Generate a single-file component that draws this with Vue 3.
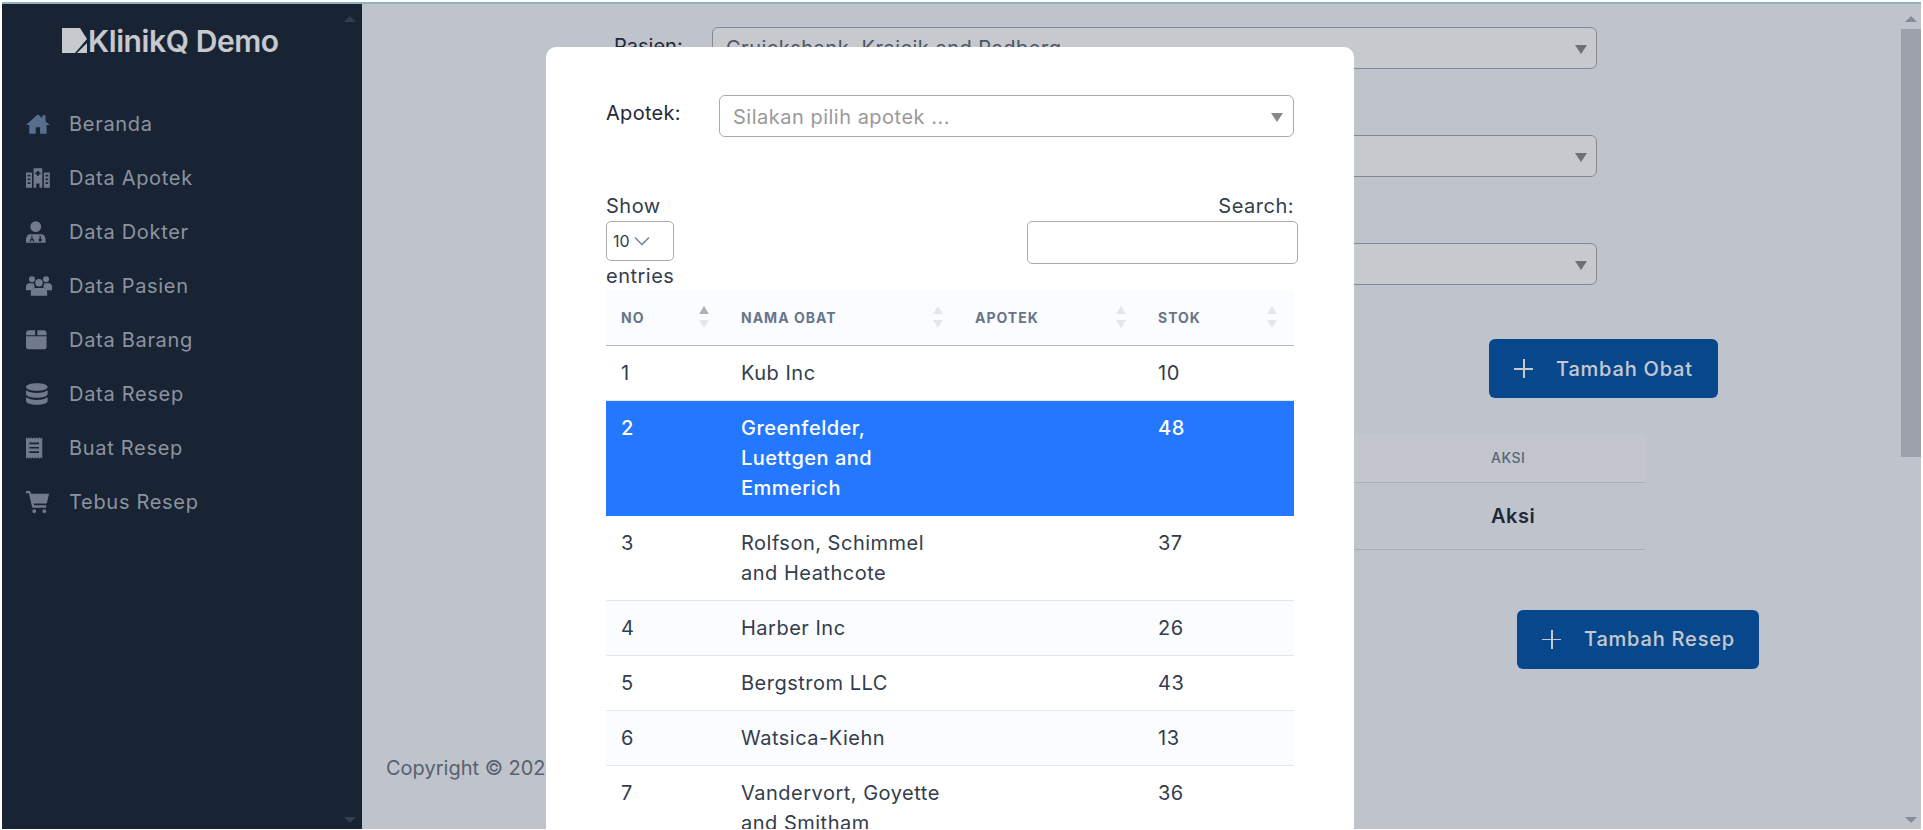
<template>
  <div class="frame">
    <div class="page">
      <aside class="sidebar">
        <div class="brand">
          <svg class="brand-mark" viewBox="0 0 25 25"><path d="M0 0H18L25 11L13 25H0Z" fill="#fff" /><path d="M25 15V25H15Z" fill="#fff" /></svg>
          <span>KlinikQ Demo</span>
        </div>
        <nav class="menu">
          <a v-for="item in menu" :key="item.label" class="menu-item">
            <svg class="menu-icon" :class="{ home: item.label === 'Beranda' }" :viewBox="item.box"><path :d="item.icon" fill="currentColor" fill-rule="evenodd" /></svg>
            <span>{{ item.label }}</span>
          </a>
        </nav>
        <span class="arrow arrow-up side-up"></span>
        <span class="arrow arrow-down side-down"></span>
      </aside>

      <main class="content">
        <div class="form">
          <div v-for="(row, i) in formRows" :key="i" class="form-row">
            <label>{{ row.label }}</label>
            <div class="select">
              <span>{{ row.value }}</span>
              <i class="caret"></i>
            </div>
          </div>
        </div>

        <button class="btn btn-obat"><span class="plus"></span>Tambah Obat</button>

        <table class="resep-table">
          <thead>
            <tr><th></th><th class="aksi-col">Aksi</th></tr>
          </thead>
          <tbody>
            <tr><td></td><td class="aksi-col">Aksi</td></tr>
          </tbody>
        </table>

        <button class="btn btn-resep"><span class="plus"></span>Tambah Resep</button>

        <footer class="copyright">Copyright © 2023</footer>
      </main>

      <div class="scrollbar">
        <span class="arrow arrow-up"></span>
        <div class="thumb"></div>
        <span class="arrow arrow-down"></span>
      </div>

      <div class="overlay">
        <div class="modal">
          <div class="apotek-row">
            <label>Apotek:</label>
            <div class="select modal-select">
              <span class="placeholder">Silakan pilih apotek ...</span>
              <i class="caret"></i>
            </div>
          </div>

          <div class="dt-top">
            <div class="dt-length">
              <div>Show</div>
              <div class="length-select">10
                <svg viewBox="0 0 16 10"><path d="M1 1.5L8 8.5L15 1.5" fill="none" stroke="#7b8a9e" stroke-width="1.6" /></svg>
              </div>
              <div>entries</div>
            </div>
            <div class="dt-search">
              <div>Search:</div>
              <div class="search-input"></div>
            </div>
          </div>

          <table class="obat-table">
            <colgroup>
              <col style="width: 120px" />
              <col style="width: 234px" />
              <col style="width: 183px" />
              <col style="width: 151px" />
            </colgroup>
            <thead>
              <tr>
                <th v-for="(col, i) in columns" :key="col">
                  {{ col }}
                  <span class="sort">
                    <i class="sort-up" :class="{ active: i === 0 }"></i>
                    <i class="sort-down"></i>
                  </span>
                </th>
              </tr>
            </thead>
            <tbody>
              <tr v-for="o in obat" :key="o.no" :class="{ selected: o.no === 2 }">
                <td>{{ o.no }}</td>
                <td class="name">{{ o.nama }}</td>
                <td></td>
                <td>{{ o.stok }}</td>
              </tr>
            </tbody>
          </table>
        </div>
      </div>
    </div>
  </div>
</template>

<script setup>
const menu = [
  { label: 'Beranda', box: '1 0 24 24', icon: 'M12 3L1 13h3v8h6v-6h4v6h6v-8h3l-4-3.6V4h-3v2.7z' },
  { label: 'Data Apotek', box: '1 0 24 24', icon: 'M8 3h8v18h-2.5v-4h-3v4H8zM11 5.5v1.5H9.500v1.500H11V10h2V8.500h1.500V7H13V5.500zM1 7h5.500v14H1zM2.500 9v1.500h2.500V9zM2.500 12.500V14h2.500v-1.500zM2.500 16v1.500h2.500V16zM17.500 7H23v14h-5.500zM19 9v1.500h2.500V9zM19 12.500V14h2.500v-1.500zM19 16v1.500h2.500V16z' },
  { label: 'Data Dokter', box: '3 0 24 24', icon: 'M12 2a5 5 0 1 1 0 10a5 5 0 0 1 0-10zM7 14h10c2.800 0 4 2.500 4 5v3H3v-3c0-2.500 1.200-5 4-5zM8 15.500V18a2 2 0 0 0-1.500 2V21h1.200v-1a.8.8 0 0 1 1.600 0v1h1.200v-1A2 2 0 0 0 9 18v-2.500zM15.500 15.500V18a1.500 1.500 0 1 0 1.200 0v-2.500z' },
  { label: 'Data Pasien', box: '0 0 24 24', icon: 'M5.500 3a2.800 2.800 0 1 1 0 5.600a2.800 2.800 0 0 1 0-5.600zM18.500 3a2.800 2.800 0 1 1 0 5.600a2.800 2.800 0 0 1 0-5.600zM12 5.500a3.500 3.500 0 1 1 0 7a3.500 3.500 0 0 1 0-7zM3 9.500h4a5 5 0 0 0 1.500 3.500C6.500 13.800 5 15 4.800 16H0v-3.500c0-1.700 1.300-3 3-3zM17 9.500h4c1.700 0 3 1.300 3 3V16h-4.800c-.2-1-1.700-2.200-3.700-3a5 5 0 0 0 1.500-3.500zM8 13.800h8c2 0 3.500 1.600 3.500 3.500V21h-15v-3.700c0-1.900 1.500-3.500 3.500-3.500z' },
  { label: 'Data Barang', box: '2.5 0 24 24', icon: 'M5.500 3h5.500v4.500H2.500V6a3 3 0 0 1 3-3zM13 3h5.500a3 3 0 0 1 3 3v1.500H13zM2.500 8.500h19v10a2 2 0 0 1-2 2h-15a2 2 0 0 1-2-2z' },
  { label: 'Data Resep', box: '2 0 24 24', icon: 'M12 2c5 0 10 1.300 10 3.500S17 9 12 9S2 7.700 2 5.500S7 2 12 2zM2 8.500C4 10 8 11 12 11s8-1 10-2.500V12c0 2.200-5 3.500-10 3.500S2 14.200 2 12zM2 15c2 1.500 6 2.500 10 2.500s8-1 10-2.500v3.500C22 20.700 17 22 12 22S2 20.700 2 18.500z' },
  { label: 'Buat Resep', box: '3 0 24 24', icon: 'M3 2l1.250 1.500L5.500 2l1.250 1.500L8 2l1.250 1.500L10.500 2l1.250 1.500L13 2l1.250 1.500L15.500 2l1.250 1.500L18 2v20l-1.250-1.500L15.500 22l-1.250-1.500L13 22l-1.250-1.500L10.500 22l-1.250-1.500L8 22l-1.250-1.500L5.500 22l-1.250-1.500L3 22zM6 7v1.500h9V7zM6 11v1.500h9V11zM6 15v1.500h9V15z' },
  { label: 'Tebus Resep', box: '0 -1 27 27', icon: 'M0 1h4.200l1 3H24l-2.500 10H8l.5 2H21v2.500H6.500L3 3.500H0zM8.500 20a2 2 0 1 1 0 4a2 2 0 0 1 0-4zM19 20a2 2 0 1 1 0 4a2 2 0 0 1 0-4z' }
]

const formRows = [
  { label: 'Pasien:', value: 'Cruickshank, Krajcik and Padberg' },
  { label: '', value: '' },
  { label: '', value: '' }
]

const columns = ['No', 'Nama Obat', 'Apotek', 'Stok']

const obat = [
  { no: 1, nama: 'Kub Inc', stok: 10 },
  { no: 2, nama: 'Greenfelder,\nLuettgen and\nEmmerich', stok: 48 },
  { no: 3, nama: 'Rolfson, Schimmel\nand Heathcote', stok: 37 },
  { no: 4, nama: 'Harber Inc', stok: 26 },
  { no: 5, nama: 'Bergstrom LLC', stok: 43 },
  { no: 6, nama: 'Watsica-Kiehn', stok: 13 },
  { no: 7, nama: 'Vandervort, Goyette\nand Smitham', stok: 36 }
]
</script>

<style>
html, body { margin: 0; overflow: hidden; }
</style>

<style scoped>
* { box-sizing: border-box; }

.frame {
  height: 830px;
  padding: 2px 2px 1px;
  background: #fff;
  font-family: Inter, "Liberation Sans", sans-serif;
  font-size: 20px;
  letter-spacing: .5px;
  line-height: 30px;
  color: #1f2937;
  overflow: hidden;
}

.page {
  position: relative;
  display: flex;
  height: 100%;
  border-top: 2px solid #8fb3b8;
  background: #f6f7fb;
  overflow: hidden;
}

/* sidebar */
.sidebar {
  position: relative;
  flex: 0 0 360px;
  background: #172230;
  color: #fff;
}
.brand {
  display: flex;
  align-items: center;
  gap: 1px;
  height: 44px;
  margin: 15px 0 0 60px;
  font-size: 30px;
  font-weight: 600;
  letter-spacing: -.4px;
}
.brand-mark { width: 25px; height: 25px; margin-bottom: 1px; }
.menu { margin-top: 34px; }
.menu-item {
  display: flex;
  align-items: center;
  height: 54px;
  padding-left: 24px;
  color: #b2b7c0;
  letter-spacing: .7px;
}
.menu-icon {
  flex: none;
  width: 26px;
  height: 26px;
  margin-right: 17px;
  color: #8d96a6;
}
.menu-icon.home { color: #6d86a8; }

.arrow {
  display: block;
  width: 0;
  border-left: 6px solid transparent;
  border-right: 6px solid transparent;
}
.arrow-up { border-bottom: 6px solid #a8adb5; }
.arrow-down { border-top: 6px solid #a8adb5; }
.side-up { position: absolute; top: 12px; right: 6px; border-bottom-color: #3b4655; }
.side-down { position: absolute; bottom: 6px; right: 6px; border-top-color: #3b4655; }

/* page under the modal */
.content {
  flex: 1;
  display: flex;
  flex-direction: column;
  align-items: flex-start;
  min-width: 0;
  padding-top: 23px;
}
.form { margin-left: 252px; }
.form-row {
  display: flex;
  align-items: flex-start;
  height: 42px;
  margin-bottom: 66px;
}
.form-row:last-child { margin-bottom: 0; }
.form-row label {
  width: 98px;
  padding-top: 4px;
  letter-spacing: 0;
}
.select {
  position: relative;
  display: flex;
  align-items: center;
  width: 885px;
  height: 42px;
  padding: 0 13px;
  border: 1px solid #aaa;
  border-radius: 6px;
  background: #fff;
  color: #5b6472;
}
.caret {
  position: absolute;
  top: 17px;
  right: 9px;
  border-left: 6px solid transparent;
  border-right: 6px solid transparent;
  border-top: 9px solid #888;
}

.btn {
  display: flex;
  align-items: center;
  height: 59px;
  padding: 0 25px;
  border: 0;
  border-radius: 6px;
  background: #0052a7;
  color: #fff;
  font: 500 20px Inter, "Liberation Sans", sans-serif;
  letter-spacing: .8px;
}
.plus {
  position: relative;
  flex: none;
  width: 19px;
  height: 19px;
  margin-right: 23px;
}
.plus::before, .plus::after {
  content: "";
  position: absolute;
  background: #fff;
}
.plus::before { left: 0; right: 0; top: 9px; height: 1.5px; }
.plus::after { top: 0; bottom: 0; left: 9px; width: 1.5px; }
.btn-obat { margin: 54px 0 0 1127px; width: 229px; white-space: nowrap; }
.btn-resep { margin: 60px 0 0 1155px; width: 242px; white-space: nowrap; }

.resep-table {
  width: 1031px;
  margin: 36px 0 0 252px;
  border-collapse: collapse;
}
.resep-table th {
  height: 48px;
  padding: 0 15px;
  background: #fbfcfe;
  border-bottom: 1px solid #d8dde3;
  font-size: 14px;
  font-weight: 500;
  text-align: left;
  text-transform: uppercase;
  color: #6b7a8f;
}
.resep-table td {
  height: 67px;
  padding: 0 15px;
  border-bottom: 1px solid #d8dde3;
  font-weight: 600;
}
.aksi-col { width: 169px; }

.copyright {
  margin: auto 0 46px 24px;
  letter-spacing: 0;
  color: #6b7480;
  white-space: nowrap;
}

/* page scrollbar */
.scrollbar {
  position: absolute;
  top: 0;
  right: 0;
  bottom: 0;
  width: 21px;
}
.scrollbar .arrow { position: absolute; left: 5px; }
.scrollbar .arrow-up { top: 12px; }
.scrollbar .arrow-down { bottom: 6px; }
.thumb {
  position: absolute;
  top: 25px;
  left: 1px;
  width: 20px;
  height: 428px;
  background: #c7cad1;
}

/* modal */
.overlay {
  position: absolute;
  inset: 0;
  display: flex;
  justify-content: center;
  padding: 43px 23px 0 0;
  background: rgba(27, 39, 59, .25);
}
.modal {
  flex: 0 0 808px;
  height: 1000px;
  padding: 48px 60px 0;
  border-radius: 10px;
  background: #fff;
}
.apotek-row {
  display: flex;
  align-items: flex-start;
  height: 42px;
}
.apotek-row label {
  width: 113px;
  padding-top: 3px;
  letter-spacing: .3px;
}
.modal-select { width: 575px; }
.modal-select .caret { right: 10px; }
.placeholder { padding-top: 2px; color: #999; }

.dt-top {
  display: flex;
  justify-content: space-between;
  margin-top: 54px;
  height: 99px;
  color: #333d4d;
}
.length-select {
  display: flex;
  align-items: center;
  gap: 4px;
  width: 68px;
  height: 40px;
  padding-left: 6px;
  border: 1px solid #aaa;
  border-radius: 5px;
  font-size: 16px;
  letter-spacing: 0;
}
.length-select svg { width: 16px; height: 10px; }
.dt-search { text-align: right; margin-right: -4px; }
.dt-search > div:first-child { padding-right: 4px; }
.search-input {
  width: 271px;
  height: 43px;
  border: 1px solid #aaa;
  border-radius: 5px;
}

.obat-table {
  width: 688px;
  table-layout: fixed;
  border-collapse: collapse;
  color: #333d4d;
}
.obat-table th {
  position: relative;
  height: 55px;
  padding: 2px 15px 0;
  background: #fbfcfe;
  border-bottom: 1px solid #b5b8bd;
  font-size: 14px;
  font-weight: 700;
  text-align: left;
  text-transform: uppercase;
  letter-spacing: 1px;
  color: #66758a;
}
.sort {
  position: absolute;
  top: 16px;
  right: 17px;
}
.sort i {
  display: block;
  width: 0;
  border-left: 5.500px solid transparent;
  border-right: 5.500px solid transparent;
}
.sort-up { border-bottom: 8px solid #e3e6eb; margin-bottom: 6px; }
.sort-up.active { border-bottom-color: #a9b2bf; }
.sort-down { border-top: 8px solid #e3e6eb; }
.obat-table td {
  padding: 12px 15px;
  border-bottom: 1px solid #e2e5ea;
  vertical-align: top;
}
.obat-table .name { white-space: pre-line; }
.obat-table tbody tr:nth-child(even) { background: #fbfcfe; }
.obat-table tbody tr.selected {
  background: #2478ff;
  color: #fff;
  font-weight: 500;
}
.obat-table tr.selected td { border-bottom-color: #2478ff; }
</style>
